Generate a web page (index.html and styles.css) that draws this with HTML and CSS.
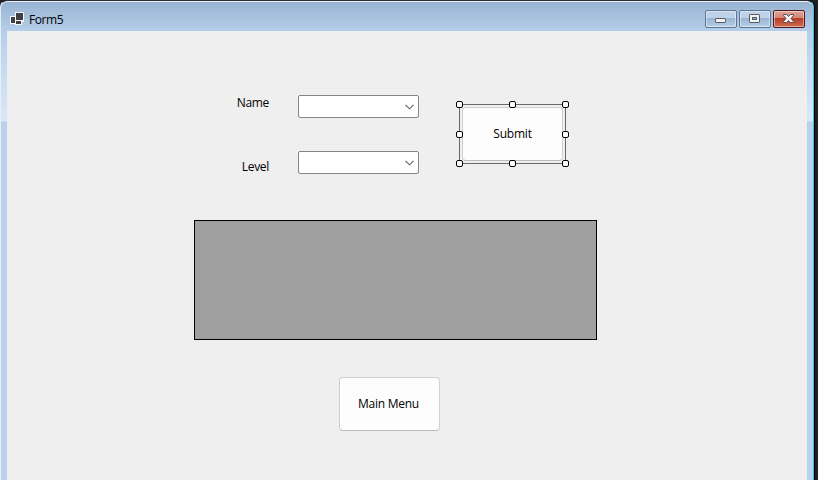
FILE: index.html
```html
<!DOCTYPE html>
<html lang="en">
<head>
<meta charset="utf-8">
<title>Form5</title>
<link rel="stylesheet" href="styles.css">
</head>
<body>
<div class="window">
  <header class="titlebar">
    <svg class="app-icon" width="14" height="13" viewBox="0 0 14 13" shape-rendering="crispEdges">
      <path fill="#f4f7fa" d="M5 0h9v10h-2v3H5v-1H0V4h5z"/>
      <path fill="#3f3f41" d="M6 1h7v7H6zM1 5h4v6H1zM6 9h5v3H6z"/>
    </svg>
    <span class="title">Form5</span>
    <div class="controls">
      <button class="control" aria-label="Minimize">
        <svg width="30" height="16" viewBox="0 0 30 16"><rect x="9.5" y="7.5" width="10" height="4" rx=".6" fill="#f3f3f3" stroke="#53596b"/></svg>
      </button>
      <button class="control" aria-label="Maximize">
        <svg width="30" height="16" viewBox="0 0 30 16"><rect x="9.5" y="3.5" width="10" height="8" rx=".6" fill="#f3f3f3" stroke="#53596b"/><rect x="12.5" y="6.5" width="4" height="2" fill="#9eb5d0" stroke="#53596b"/></svg>
      </button>
      <button class="control close" aria-label="Close">
        <svg width="30" height="16" viewBox="0 0 30 16"><path d="M9.500 3.500h3.200l1.800 2 1.800-2h3.200v1l-2.500 3 2.500 3v1h-3.200l-1.800-2-1.800 2H9.500v-1l2.500-3-2.500-3z" fill="#f5f5f5" stroke="#5c4a55"/></svg>
      </button>
    </div>
  </header>
  <main class="form">
    <section class="fields">
      <div class="inputs">
        <label class="name-label">Name</label>
        <div class="combo"><svg width="9" height="6" viewBox="0 0 9 6"><path d="M.5.800l4 4 4-4"/></svg></div>
        <label class="level-label">Level</label>
        <div class="combo"><svg width="9" height="6" viewBox="0 0 9 6"><path d="M.5.800l4 4 4-4"/></svg></div>
      </div>
      <div class="selection">
        <button class="button submit">Submit</button>
        <i class="handle top left"></i><i class="handle top center"></i><i class="handle top right"></i>
        <i class="handle middle left"></i><i class="handle middle right"></i>
        <i class="handle bottom left"></i><i class="handle bottom center"></i><i class="handle bottom right"></i>
      </div>
    </section>
    <div class="data-grid"></div>
    <button class="button menu">Main Menu</button>
  </main>
</div>
</body>
</html>
```
FILE: styles.css
```css
* { box-sizing: border-box; }
body {
  margin: 0;
  height: 480px;
  overflow: hidden;
  background: #202022;
  color: #000;
  font: 12px/16px "Open Sans", "Noto Sans", sans-serif;
}
button { padding: 0; margin: 0; font: inherit; color: inherit; }
svg { display: block; }
.window {
  width: 814px;
  height: 480px;
  padding: 0 6px;
  border-top: 1px solid #302e34;
  border-left: 1px solid #e4eef9;
  border-right: 1px solid #38c4e8;
  border-radius: 7px 7px 0 0;
  background: linear-gradient(#98b3d1 0, #b5cee9 30px, #c3d8ef 60px, #dbe8f6 120px, #b9d1ea 121px);
  box-shadow: inset 0 1px #e9f1f9, 1px 0 #000;
}
.titlebar { display: flex; height: 30px; }
.app-icon { margin: 11px 0 0 3px; }
.title { margin: 11px 0 0 5px; letter-spacing: -0.4px; }
.controls { display: flex; gap: 2px; margin: 9px 2px 0 auto; }
.control {
  width: 32px;
  height: 18px;
  border: 1px solid #5c7592;
  border-radius: 2px;
  background: linear-gradient(#bfd2e7 0 45%, #9bb5d1 46%, #b5cfe9);
  box-shadow: inset 0 0 0 1px rgba(255,255,255,.45);
}
.close {
  border-color: #4d1825;
  background: linear-gradient(#dfa394 0, #d58575 45%, #b83c28 46%, #cd6d50);
}
.form { height: 449px; width: 800px; background: #efefef; padding-top: 64px; }
.fields { display: flex; height: 125px; padding-left: 187px; }
.inputs {
  display: grid;
  grid-template: 23px 23px / 75px 121px;
  gap: 33px 29px;
  text-align: right;
}
.name-label { letter-spacing: -.35px; }
.level-label { padding-top: 8px; letter-spacing: -.3px; }
.combo {
  display: flex;
  align-items: center;
  justify-content: flex-end;
  padding-right: 4px;
  border: 1px solid #858585;
  border-radius: 2px;
  background: #fff;
}
.combo path { fill: none; stroke: #606060; stroke-width: 1.1; }
.selection {
  position: relative;
  width: 107px;
  height: 60px;
  margin: 9px 0 0 40px;
  padding: 2px;
  border: 1px solid #686868;
}
.button {
  display: block;
  border: 1px solid #d0d0d0;
  border-bottom-color: #bbb;
  border-radius: 4px;
  background: #fdfdfd;
}
.submit { width: 101px; height: 54px; letter-spacing: -.2px; }
.handle {
  position: absolute;
  width: 7px;
  height: 7px;
  border: 1px solid #000;
  border-radius: 2px;
  background: #fff;
}
.top { top: -4px; }
.middle { top: 26px; }
.bottom { bottom: -4px; }
.left { left: -4px; }
.center { left: 49px; }
.right { right: -4px; }
.data-grid { width: 403px; height: 120px; margin-left: 187px; border: 1px solid #000; background: #a0a0a0; }
.menu { width: 101px; height: 54px; margin: 37px 0 0 332px; padding-right: 2px; letter-spacing: -.25px; }
```
